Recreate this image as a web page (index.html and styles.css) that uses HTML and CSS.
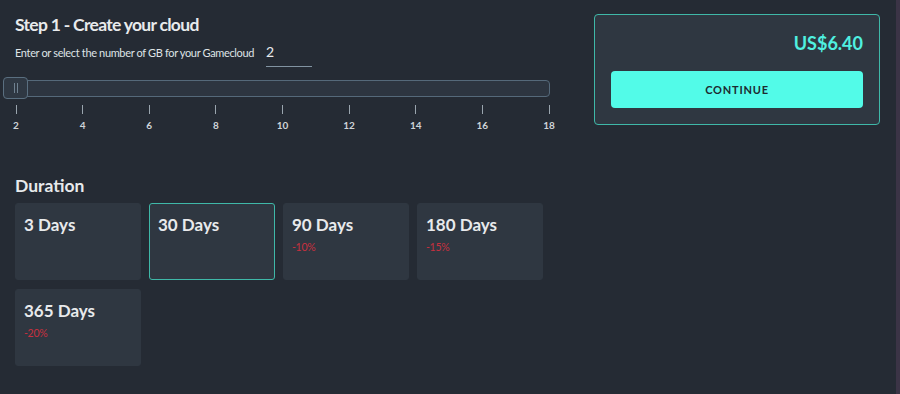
FILE: index.html
```html
<!DOCTYPE html>
<html>
	<head>
		<meta charset="UTF-8">
		<title>Create your cloud</title>
		<link rel="stylesheet" href="styles.css">
	</head>
	<body>
		<div class="page">
			<div class="main">
				<h1 class="title">Step 1 - Create your cloud</h1>
				<div class="size-row">
					<span class="size-label">Enter or select the number of GB for your Gamecloud</span>
					<div class="size-input">2</div>
				</div>
				<div class="slider">
					<div class="track"></div>
					<div class="handle"><i></i><i></i></div>
				</div>
				<ul class="ticks">
					<li><span class="line"></span>2</li>
					<li><span class="line"></span>4</li>
					<li><span class="line"></span>6</li>
					<li><span class="line"></span>8</li>
					<li><span class="line"></span>10</li>
					<li><span class="line"></span>12</li>
					<li><span class="line"></span>14</li>
					<li><span class="line"></span>16</li>
					<li><span class="line"></span>18</li>
				</ul>
				<h2 class="subtitle">Duration</h2>
				<div class="durations">
					<div class="duration">
						<div class="days">3 Days</div>
					</div>
					<div class="duration active">
						<div class="days">30 Days</div>
					</div>
					<div class="duration">
						<div class="days">90 Days</div>
						<div class="discount">-10%</div>
					</div>
					<div class="duration">
						<div class="days">180 Days</div>
						<div class="discount">-15%</div>
					</div>
					<div class="duration">
						<div class="days">365 Days</div>
						<div class="discount">-20%</div>
					</div>
				</div>
			</div>
			<div class="side">
				<div class="summary">
					<div class="price">US$6.40</div>
					<button class="continue">CONTINUE</button>
				</div>
			</div>
			<div class="edge"></div>
		</div>
	</body>
</html>
```
FILE: styles.css
```css
html, body{
	margin: 0;
	padding: 0;
	height: 100%;
}
body{
	background: #252b34;
	color: #e8eaec;
	font-family: "Lato", "Liberation Sans", sans-serif;
}
.page{
	display: flex;
	height: 394px;
}
.main{
	width: 560px;
	padding-left: 3px;
}
.title{
	margin: 13px 0 0 12px;
	font-size: 17.5px;
	line-height: 24px;
	font-weight: 700;
	letter-spacing: -0.7px;
}
.size-row{
	display: flex;
	align-items: flex-end;
	margin: 4px 0 0 12px;
	height: 26px;
}
.size-label{
	font-size: 11px;
	line-height: 16px;
	padding-bottom: 6px;
	letter-spacing: -0.35px;
	color: #dfe3e6;
}
.size-input{
	width: 46px;
	margin-left: 12px;
	font-size: 14px;
	line-height: 20px;
	padding-bottom: 4px;
	border-bottom: 1px solid #8193a1;
	color: #e8eaec;
}
.slider{
	position: relative;
	margin-top: 10px;
	width: 547px;
	height: 22px;
	display: flex;
	align-items: center;
}
.track{
	flex: 1;
	height: 15px;
	background: #2d3540;
	border: 1px solid #55697a;
	border-radius: 4px;
}
.handle{
	position: absolute;
	left: 0;
	top: 0;
	width: 23px;
	height: 20px;
	background: #2f3843;
	border: 1px solid #5a6f80;
	border-radius: 4px;
	display: flex;
	justify-content: center;
	align-items: center;
	gap: 2px;
}
.handle i{
	width: 1px;
	height: 10px;
	background: #6f8190;
}
.ticks{
	display: flex;
	justify-content: space-between;
	list-style: none;
	margin: 6px 0 0 3px;
	padding: 0;
	width: 553px;
}
.ticks li{
	width: 20px;
	display: flex;
	flex-direction: column;
	align-items: center;
	font-size: 10px;
	font-weight: 700;
	color: #cfd4d8;
	line-height: 12px;
}
.ticks .line{
	width: 1px;
	height: 9px;
	background: #9aa5ae;
	margin-bottom: 5px;
}
.subtitle{
	margin: 45px 0 0 12px;
	font-size: 17.5px;
	line-height: 20px;
	font-weight: 700;
}
.durations{
	display: flex;
	flex-wrap: wrap;
	gap: 9px 8px;
	margin: 7px 0 0 12px;
	width: 540px;
}
.duration{
	box-sizing: border-box;
	width: 126px;
	height: 77px;
	background: #2f3741;
	border: 1px solid #2f3741;
	border-radius: 3px;
	padding: 10px 8px;
}
.duration.active{
	border-color: #3fb8a8;
}
.days{
	font-size: 17px;
	line-height: 22px;
	font-weight: 700;
	color: #e8eaec;
}
.discount{
	margin-top: 5px;
	font-size: 10.5px;
	line-height: 12px;
	letter-spacing: -0.3px;
	color: #c8303f;
}
.side{
	flex: 1;
	padding: 14px 0 0 31px;
}
.summary{
	box-sizing: border-box;
	width: 286px;
	height: 111px;
	background: #2f3741;
	border: 1px solid #3fb8a8;
	border-radius: 4px;
	padding: 17px 16px 0 16px;
	display: flex;
	flex-direction: column;
	align-items: flex-end;
}
.price{
	font-size: 18px;
	line-height: 22px;
	font-weight: 700;
	color: #4ff0e0;
}
.continue{
	margin-top: 17px;
	width: 100%;
	height: 37px;
	border: none;
	border-radius: 4px;
	background: #52fbe8;
	color: #1d2a30;
	font-family: "Lato", "Liberation Sans", sans-serif;
	font-size: 11px;
	font-weight: 700;
	letter-spacing: 0.8px;
}
.edge{
	width: 4px;
	background: #3b3446;
}
```
